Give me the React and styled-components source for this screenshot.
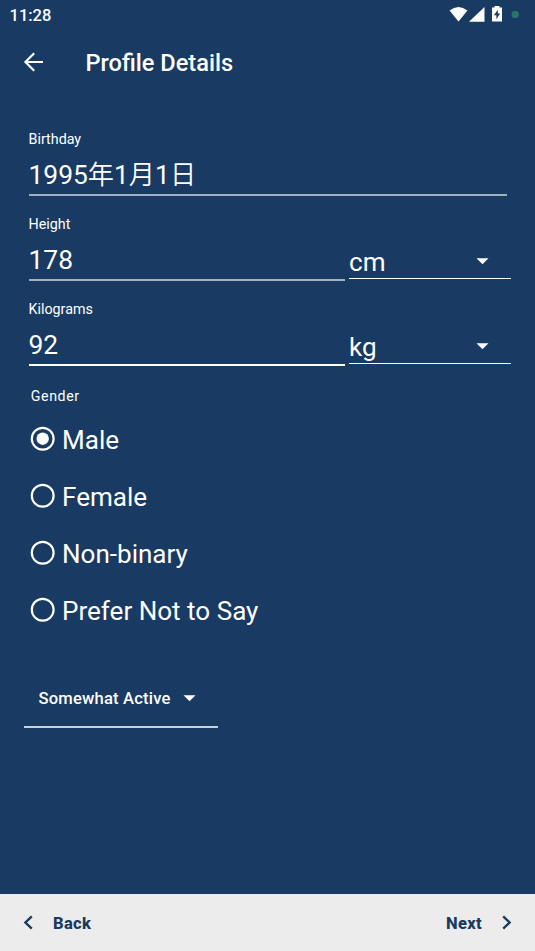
import React, { useState } from "react";
import styled, { createGlobalStyle } from "styled-components";

const NAVY = "#193a62";

const GlobalStyle = createGlobalStyle`
  * { box-sizing: border-box; }
  body { margin: 0; background: ${NAVY}; }
`;

const Screen = styled.div`
  display: flex;
  flex-direction: column;
  width: 535px;
  height: 951px;
  overflow: hidden;
  background: ${NAVY};
  color: #fff;
  font-family: Roboto, "Noto Sans CJK JP", sans-serif;
`;

const StatusBar = styled.header`
  display: flex;
  align-items: center;
  justify-content: space-between;
  height: 30px;
  padding: 0 15.5px 0 9.5px;
`;

const Clock = styled.span`
  padding-top: 1px;
  font-size: 16.5px;
  font-weight: 500;
  line-height: 20px;
`;

const StatusIcons = styled.svg`
  display: block;
  width: 72px;
  height: 20px;
`;

const AppBar = styled.div`
  display: flex;
  align-items: center;
  height: 66px;
  padding-left: 23px;
`;

const ArrowIcon = styled.svg`
  display: block;
  width: 21px;
  height: 20px;
  margin-top: -2px;
`;

const Title = styled.h1`
  margin: 0 0 0 41.5px;
  font-size: 23.6px;
  font-weight: 500;
  line-height: 30px;
`;

const Form = styled.main`
  flex: 1;
  padding: 34px 24px 0 28.5px;
`;

const FieldRow = styled.div`
  display: flex;
  height: 85px;
`;

const Field = styled.label`
  display: flex;
  flex-direction: column;
  width: ${(p) => p.$width}px;
  height: ${(p) => (p.$active ? 66 : 65.5)}px;
  border-bottom: 2px solid ${(p) => (p.$active ? "#fff" : "#a3b0c0")};
`;

const Label = styled.span`
  font-size: 14.3px;
  line-height: 18px;
`;

const Value = styled.span`
  margin-top: 11px;
  font-size: 26.4px;
  line-height: 32px;
  white-space: nowrap;
`;

const DateMark = styled.span`
  font-size: 26.2px;
  font-weight: 350;
`;

const UnitSelect = styled.div`
  display: flex;
  align-items: flex-end;
  justify-content: space-between;
  width: 162px;
  height: 64px;
  margin-left: 4px;
  padding-right: 22px;
  border-bottom: 1px solid #fff;
`;

const UnitText = styled.span`
  font-size: 26.1px;
  line-height: 32px;
`;

const Caret = styled.svg`
  display: block;
  width: 13px;
  height: 7px;
  margin-bottom: ${(p) => p.$lift || 0}px;
`;

const GroupLabel = styled.div`
  margin: 2px 0 0 2.3px;
  font-size: 14.2px;
  line-height: 18px;
  letter-spacing: 0.6px;
`;

const RadioList = styled.div`
  display: flex;
  flex-direction: column;
  margin: 5px 0 0 1.5px;
`;

const RadioRow = styled.div`
  display: flex;
  align-items: center;
  gap: 7px;
  height: 57px;
  cursor: pointer;
`;

const RadioIcon = styled.svg`
  display: block;
  width: 25px;
  height: 25px;
`;

const RadioText = styled.span`
  padding-top: 2px;
  font-size: 26.05px;
  line-height: 32px;
  white-space: nowrap;
`;

const ActivitySelect = styled.div`
  display: flex;
  align-items: center;
  width: 194px;
  height: 58px;
  margin: 31.5px 0 0 -4.5px;
  padding: 2px 0 0 14.5px;
  border-bottom: 2px solid #c9d0d8;
`;

const ActivityText = styled.span`
  width: 144px;
  padding-top: 1px;
  font-size: 16.6px;
  font-weight: 500;
  line-height: 20px;
  letter-spacing: 0.18px;
  white-space: nowrap;
`;

const Footer = styled.footer`
  display: flex;
  align-items: center;
  justify-content: space-between;
  height: 57px;
  padding: 0 23px;
  background: #ececec;
  color: ${NAVY};
`;

const NavButton = styled.button`
  display: flex;
  align-items: center;
  gap: 20px;
  padding: 0;
  border: 0;
  background: none;
  color: inherit;
  font: 800 16.5px/20px Roboto, sans-serif;
  letter-spacing: 0.35px;
`;

const NavText = styled.span`
  padding-top: 2px;
`;

const Chevron = styled.svg`
  display: block;
  width: 10px;
  height: 15px;
`;

const DropCaret = ({ lift }) => (
  <Caret viewBox="0 0 13 7" $lift={lift}>
    <path d="M0.5 0.3H12.5L6.5 6.3Z" fill="currentColor" />
  </Caret>
);

const Radio = ({ label, checked, onSelect }) => (
  <RadioRow role="radio" aria-checked={checked} onClick={onSelect}>
    <RadioIcon viewBox="0 0 25 25">
      <circle cx="12.7" cy="12.7" r="10.9" fill="none" stroke="#fff" strokeWidth="2.2" />
      {checked && <circle cx="12.7" cy="12.7" r="6.2" fill="#fff" />}
    </RadioIcon>
    <RadioText>{label}</RadioText>
  </RadioRow>
);

const Measure = ({ label, value, unit, active }) => (
  <FieldRow>
    <Field $width={316.5} $active={active}>
      <Label>{label}</Label>
      <Value>{value}</Value>
    </Field>
    <UnitSelect>
      <UnitText>{unit}</UnitText>
      <DropCaret lift={13} />
    </UnitSelect>
  </FieldRow>
);

const GENDERS = ["Male", "Female", "Non-binary", "Prefer Not to Say"];

export default function App() {
  const [gender, setGender] = useState("Male");
  return (
    <>
      <GlobalStyle />
      <Screen>
        <StatusBar>
          <Clock>11:28</Clock>
          <StatusIcons viewBox="0 0 72 20">
            <path d="M1.5 5.6Q10.5 -1.4 19.5 5.6L10.5 16.6Z" fill="#fff" />
            <path d="M36.5 2V16.8H21Z" fill="#fff" />
            <path d="M46.5 2.6V1H51.5V2.6H54V16.6H44V2.6Z" fill="#fff" />
            <path d="M49.8 4.8L45.9 10.2H48.4V14.2L52.1 8.6H49.8Z" fill={NAVY} />
            <circle cx="67.2" cy="9.4" r="3.7" fill="#287567" />
          </StatusIcons>
        </StatusBar>
        <AppBar>
          <ArrowIcon viewBox="0 0 21 20" fill="none" stroke="#fff" strokeWidth="2.2">
            <path d="M20 10H2.5M11.2 1.2L2.4 10L11.2 18.8" />
          </ArrowIcon>
          <Title>Profile Details</Title>
        </AppBar>
        <Form>
          <FieldRow>
            <Field $width={478}>
              <Label>Birthday</Label>
              <Value>
                1995<DateMark>年</DateMark>1<DateMark>月</DateMark>1<DateMark>日</DateMark>
              </Value>
            </Field>
          </FieldRow>
          <Measure label="Height" value="178" unit="cm" />
          <Measure label="Kilograms" value="92" unit="kg" active />
          <GroupLabel>Gender</GroupLabel>
          <RadioList role="radiogroup">
            {GENDERS.map((g) => (
              <Radio key={g} label={g} checked={g === gender} onSelect={() => setGender(g)} />
            ))}
          </RadioList>
          <ActivitySelect>
            <ActivityText>Somewhat Active</ActivityText>
            <DropCaret />
          </ActivitySelect>
        </Form>
        <Footer>
          <NavButton>
            <Chevron viewBox="0 0 10 15" fill="none" stroke="currentColor" strokeWidth="2.4">
              <path d="M8.8 1.3L2.4 7.5L8.8 13.7" />
            </Chevron>
            <NavText>Back</NavText>
          </NavButton>
          <NavButton>
            <NavText>Next</NavText>
            <Chevron viewBox="0 0 10 15" fill="none" stroke="currentColor" strokeWidth="2.4">
              <path d="M1.2 1.3L7.6 7.5L1.2 13.7" />
            </Chevron>
          </NavButton>
        </Footer>
      </Screen>
    </>
  );
}
